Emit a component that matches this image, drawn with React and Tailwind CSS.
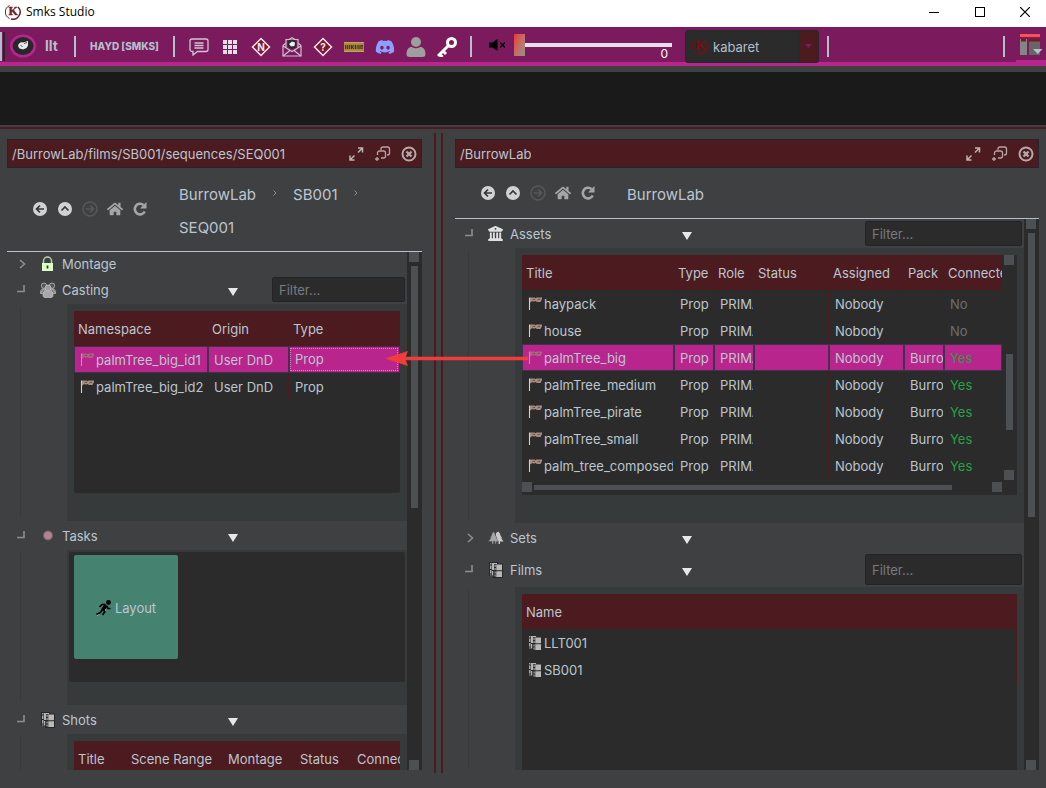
import React from "react";
import clsx from "clsx";
import { FaDiscord, FaHome } from "react-icons/fa";
import { FaBuildingColumns } from "react-icons/fa6";

// ---------- icons ----------

function KabaretLogo({ color, size = 16 }) {
  return (
    <svg width={size} height={size} viewBox="0 0 16 16">
      <path d="M4.500 1.500A7.200 7.200 0 0 0 4.500 14.500" fill="none" stroke={color} strokeWidth="1" />
      <path d="M13 3A7.200 7.200 0 0 1 6 15" fill="none" stroke={color} strokeWidth="1.500" />
      <text x="3.500" y="11" fontSize="12" fontWeight="700" fontFamily="Liberation Serif, serif" fill={color} stroke={color} strokeWidth="0.400">
        K
      </text>
    </svg>
  );
}

function AvatarIcon() {
  return (
    <svg width="26" height="24" viewBox="0 0 26 24">
      <ellipse cx="13" cy="12" rx="13" ry="11.5" fill="#b8258c" />
      <ellipse cx="13" cy="12" rx="10.500" ry="9" fill="#26282b" />
      <path d="M8 12 C8.500 9 11 7.500 13 8.500 L18 7 L18 11.500 L16.500 14 L13 15.500 L9.500 14.500 Z" fill="#e8e8e8" />
      <path d="M10.500 11.500 l2 1 M14 9.500 l3 -1" stroke="#26282b" strokeWidth="0.800" fill="none" />
    </svg>
  );
}

function ChatIcon() {
  return (
    <svg width="20" height="18" viewBox="0 0 20 18" fill="none" stroke="#d2c6d6" strokeWidth="1.3">
      <path d="M3 1h14a2 2 0 0 1 2 2v8.500a2 2 0 0 1-2 2H8.500L4 17v-3.500H3a2 2 0 0 1-2-2V3a2 2 0 0 1 2-2z" />
      <path d="M5.500 5h9M5.500 7.500h9M5.500 10h9" />
    </svg>
  );
}

function GridIcon() {
  const steps = [0, 5, 10];
  return (
    <svg width="14" height="14" viewBox="0 0 14 14" fill="#e6dfe6">
      {steps.map((y) => steps.map((x) => <rect key={x + "-" + y} x={x} y={y} width="4" height="4" />))}
    </svg>
  );
}

function DiamondIcon({ letter }) {
  return (
    <svg width="20" height="20" viewBox="0 0 20 20">
      <path d="M10 1.500 L18.500 10 L10 18.500 L1.500 10 Z" fill="#7d1830" stroke="#f3e6ee" strokeWidth="1.500" />
      <text x="10" y="13.500" textAnchor="middle" fontSize="10" fontWeight="700" fontFamily="Inter, sans-serif" fill="#f3e6ee">
        {letter}
      </text>
    </svg>
  );
}

function MailIcon() {
  return (
    <svg width="20" height="20" viewBox="0 0 20 20" fill="none" stroke="#cfc0d0" strokeWidth="1.200">
      <path d="M4 6 L1 8.500 V19 H19 V8.500 L16 6" />
      <path d="M4 10.500 V2.500 H16 V10.500 M1 9 L10 14.500 L19 9 M1 19 L8 13.500 M19 19 L12 13.500" />
      <circle cx="10" cy="7" r="4.500" fill="#26282b" stroke="none" />
      <path d="M7 7 L10 4.500 L13 5.500 L12.500 9 L9 9.500 Z" fill="#eee" stroke="none" />
      <path d="M7 2.500 L10 0.700 L13 2.500" />
    </svg>
  );
}

function BookIcon() {
  return (
    <svg width="20" height="10" viewBox="0 0 20 10">
      <rect width="20" height="10" fill="#a98a46" />
      <path d="M0 0.500h20M0 9.500h20" stroke="#c9a455" />
      <rect x="1" y="3" width="18" height="4" fill="#8a7038" />
      <path d="M1.500 3v4M3.500 3v4M5.500 3v4M7.500 3v4M8 5l2-2M8 5l2 2M11.500 3v4M14 3v4M16 3v4M17 3.500h2M18 3v4" fill="none" stroke="#3f341f" strokeWidth="0.900" />
    </svg>
  );
}

function UserIcon() {
  return (
    <svg width="20" height="20" viewBox="0 0 20 20" fill="#9e9e9e">
      <circle cx="10" cy="5" r="5" />
      <path d="M0.500 17c0-5 3-7.500 5.500-7 2.500 1.700 5.500 1.700 8 0 2.500-.5 5.500 2 5.500 7 0 2-1 3-3 3h-13c-2 0-3-1-3-3z" />
    </svg>
  );
}

function KeyIcon() {
  return (
    <svg width="20" height="20" viewBox="0 0 20 20" fill="none" stroke="#fff">
      <circle cx="14.500" cy="5.500" r="4" strokeWidth="3" />
      <path d="M11.500 8.500 L1 19 M6 14 l3 3 M2.500 17 l3 3" strokeWidth="3" />
    </svg>
  );
}

function MuteIcon() {
  return (
    <svg width="16" height="12" viewBox="0 0 16 12">
      <path d="M0 3.500h3.500L8.500 0v12L3.500 8.500H0z" fill="#000" />
      <path d="M11 3.500l5 5M16 3.500l-5 5" stroke="#000" strokeWidth="1.300" />
    </svg>
  );
}

function LayoutIcon() {
  return (
    <svg width="24" height="24" viewBox="0 0 24 24">
      <rect x="1" y="1" width="20" height="3" fill="#ff5050" />
      <rect x="1" y="6" width="7" height="16" fill="#858585" />
      <rect x="10" y="6" width="11" height="16" fill="#666" />
      <rect x="2" y="6" width="5" height="2.500" fill="#7a1a1a" />
      <rect x="10" y="6" width="11" height="2.500" fill="#7a1a1a" />
      <path d="M14 16h9.500l-4.750 5z" fill="#b4bfcc" />
    </svg>
  );
}

function CircleArrow({ kind }) {
  const off = kind === "forward";
  const paths = {
    back: "M12 8H4.500M8 4.500L4.500 8L8 11.500",
    up: "M4.500 9.500L8 6L11.500 9.500",
    forward: "M4 8h7.500M8 4.500L11.500 8L8 11.500",
  };
  return (
    <svg width="16" height="16" viewBox="0 0 16 16">
      <circle cx="8" cy="8" r="7" fill={off ? "none" : "#d2d2d2"} stroke={off ? "#56585a" : "none"} strokeWidth="1.500" />
      <path d={paths[kind]} fill="none" stroke={off ? "#56585a" : "#35373a"} strokeWidth="1.700" />
    </svg>
  );
}

function RefreshIcon() {
  return (
    <svg width="16" height="16" viewBox="0 0 16 16">
      <path d="M12.800 10.500A5.300 5.300 0 1 1 11.500 4" fill="none" stroke="#a5a5a5" strokeWidth="2.600" />
      <path d="M14.500 1v6.500H8z" fill="#a5a5a5" />
    </svg>
  );
}

function ExpandIcon() {
  return (
    <svg width="16" height="16" viewBox="0 0 16 16" fill="none" stroke="#c0b2b2" strokeWidth="1.500">
      <path d="M9 2h4.500v4.500M13 2.500l-4 4M5.500 14H1V9.500M1.500 13.500l4-4" />
    </svg>
  );
}

function PopoutIcon() {
  return (
    <svg width="16" height="16" viewBox="0 0 16 16" fill="none" stroke="#b5a5a5" strokeWidth="1.300">
      <path d="M6 4V3a2 2 0 0 1 2-2h4.500a2 2 0 0 1 2 2v4a2 2 0 0 1-2 2H12" />
      <path d="M2.500 9V7a2 2 0 0 1 2-2h4a2 2 0 0 1 2 2v3a2 2 0 0 1-2 2H6M0 13h4M2 11v4" />
    </svg>
  );
}

function CloseIcon() {
  return (
    <svg width="16" height="16" viewBox="0 0 16 16" fill="none" stroke="#b5a9a9">
      <circle cx="8" cy="8" r="6.500" strokeWidth="2" />
      <path d="M5.500 5.500l5 5M10.500 5.500l-5 5" strokeWidth="2.400" />
    </svg>
  );
}

function LockIcon() {
  return (
    <svg width="16" height="16" viewBox="0 0 16 16">
      <path d="M3.500 8V5a4 4 0 0 1 8 0v3" fill="none" stroke="#b9cfae" strokeWidth="1.500" />
      <rect x="2" y="7" width="11" height="8" fill="#dcffc8" />
      <path d="M7.500 9.500v3" stroke="#2f3a2c" strokeWidth="1.800" />
    </svg>
  );
}

function PeopleIcon() {
  return (
    <svg width="16" height="16" viewBox="0 0 16 16" stroke="#c8c8c8" strokeWidth="0.700">
      <path d="M0.500 11c0-3 1-4.500 3.500-4.500M15.500 11c0-3-1-4.500-3.500-4.500" fill="none" />
      <path d="M0.500 11.500h3l2-4.500H3zM15.500 11.500h-3l-2-4.500H13z" fill="#7d7d7d" />
      <circle cx="4" cy="3.700" r="2.700" fill="#555" />
      <circle cx="12" cy="3.700" r="2.700" fill="#555" />
      <path d="M3 13c0-3 2-4.500 5-4.500s5 1.500 5 4.500c0 2-1 2.500-2 2.500H5c-1 0-2-.5-2-2.500z" fill="#a8a8a8" />
      <circle cx="8" cy="6" r="3" fill="#9c9c9c" />
    </svg>
  );
}

function DotIcon() {
  return (
    <svg width="16" height="16" viewBox="0 0 16 16">
      <circle cx="8" cy="7.500" r="4.500" fill="#a98690" stroke="#8a5565" />
    </svg>
  );
}

function TreesIcon() {
  return (
    <svg width="16" height="16" viewBox="0 0 16 16">
      <path d="M10.500 1.500L12.500 4.500H12L14 8h-.7L15.500 11.500H12V14h-1.500V11.500H8V3z" fill="#c8c8c8" />
      <path d="M5.500 1.500L7.500 4.500H7L9 8h-.7L10.500 11.500H8.200V14H7v-2.500H5.500V14H4V11.500H0.300L2.700 8H2L4 4.500H3.500z" fill="#a5a5a5" stroke="#3e4042" strokeWidth="0.400" />
    </svg>
  );
}

function FilmIcon({ outline, width = 16 }) {
  return (
    <svg width={width} height="16" viewBox="0 0 14 16">
      {outline && <path d="M0 0h9v1.500h5V16H4v-2H0z" fill="#262728" />}
      <path d="M1 1h1.500v1.500H1zM1 3.500h1.500V7H1zM1 8h1.500v3.500H1zM1 12.500h1.500v1H1z" fill="#a8a8a8" />
      <path d="M3 1h5v1.200H5V8H3zM3 9h1.200v4.500H3z" fill="#b4b4b4" />
      <path d="M5.500 3h1.200v2H5.500zM5.500 6h1.200v2H5.500zM5.500 9.500h1.200v2H5.500zM5.500 12.500h1.200v2H5.500z" fill="#a8a8a8" />
      <path d="M7.300 2.500H13v5.800H7.300zM7.300 9.300H13V15H7.300z" fill="#b8b8b8" />
    </svg>
  );
}

function FlagIcon() {
  return (
    <svg width="14" height="14" viewBox="0 0 14 14">
      <path d="M1.500 0.500V13" stroke="#e0cdc0" strokeWidth="1.100" />
      <path d="M2 0.500h4.500l1 .7 1-.7H14V2l-1.500 3H9L7.500 4 6.500 4.500 4 4.200 2 5.500z" fill="#a68d80" />
      <path d="M4.500 2.800l1.500-.8 1 1M9.500 3l1.500-1 1 .8" fill="none" stroke="#5a4a44" strokeWidth="0.900" />
    </svg>
  );
}

function RunnerIcon() {
  return (
    <svg width="16" height="16" viewBox="0 0 16 16" fill="none" strokeLinejoin="round">
      <path d="M5.500 11L4.500 13L1 15.500M9.500 9.500L8.500 12.500L6 15" stroke="#dff5df" strokeWidth="1" />
      <circle cx="12.500" cy="2.500" r="2.400" fill="#000" />
      <path d="M10 5L6.500 10.500" stroke="#000" strokeWidth="3.400" />
      <path d="M9.500 4.500H6L3.500 7M10.500 6l1.500 2.500h2.500M6.500 9.500L4.500 12.500L0.500 14.500M7 9.500l2 2L6.500 15" stroke="#000" strokeWidth="1.700" />
    </svg>
  );
}

function Twist({ open }) {
  return (
    <svg width="10" height="10" viewBox="0 0 10 10" fill="none" stroke="#8c8e90" strokeWidth="1.600">
      {open ? <path d="M0 6.500h7V0" /> : <path d="M3 1l4.500 4L3 9" />}
    </svg>
  );
}

// ---------- window chrome ----------

function TitleBar() {
  return (
    <header className="flex h-[27px] shrink-0 items-start bg-white text-black">
      <div className="flex items-center gap-[5px] pt-[3px] pl-[5px]">
        <KabaretLogo color="#6b2227" />
        <span className="font-['Open_Sans',sans-serif] text-[12px] leading-[18px]">Smks Studio</span>
      </div>
      <div className="ml-auto flex">
        <button aria-label="Minimize" className="flex h-6 w-[46px] items-center justify-center">
          <svg width="10" height="10" stroke="#000"><path d="M0 5.500h10" /></svg>
        </button>
        <button aria-label="Maximize" className="flex h-6 w-[46px] items-center justify-center">
          <svg width="10" height="10" fill="none" stroke="#000"><rect x="0.500" y="0.500" width="9" height="9" /></svg>
        </button>
        <button aria-label="Close" className="flex h-6 w-[43px] items-center justify-center">
          <svg width="10" height="10" stroke="#000" strokeWidth="1.200"><path d="M0 0l10 10M10 0L0 10" /></svg>
        </button>
      </div>
    </header>
  );
}

function Separator() {
  return <div className="h-[21px] w-[2px] shrink-0 bg-[#b4bfcc]" />;
}

const TOOLS = [
  { name: "Chat", icon: <ChatIcon /> },
  { name: "Apps", icon: <GridIcon /> },
  { name: "Notes", icon: <DiamondIcon letter="N" /> },
  { name: "Mail", icon: <MailIcon /> },
  { name: "Help", icon: <DiamondIcon letter="?" /> },
  { name: "Booking", icon: <BookIcon /> },
  { name: "Discord", icon: <FaDiscord size={20} color="#8c9eff" /> },
  { name: "User", icon: <UserIcon /> },
  { name: "Key", icon: <KeyIcon /> },
];

function Toolbar() {
  return (
    <nav className="flex h-[39px] shrink-0 items-center border-b-4 border-[#b8258c] bg-[#7b1a5c] pt-[3px] text-[#b4bfcc]">
      <div className="h-[29px] w-[5px] shrink-0 border-r-2 border-l-2 border-r-[#26282b] border-l-[#b4bfcc]" />
      <button aria-label="Profile" className="ml-[5px]">
        <AvatarIcon />
      </button>
      <button className="ml-[9px] w-[29px] text-left text-[14px] font-bold">llt</button>
      <Separator />
      <button className="ml-[14px] w-[83px] text-left text-[10px] font-extrabold whitespace-nowrap">HAYD [SMKS]</button>
      <Separator />
      <div className="ml-[8px] flex pt-px">
        {TOOLS.map((tool) => (
          <button key={tool.name} aria-label={tool.name} className="flex h-[30px] w-[31px] items-center justify-center">
            {tool.icon}
          </button>
        ))}
      </div>
      <div className="ml-[8px]">
        <Separator />
      </div>
      <div className="ml-[17px] flex items-center gap-[9px] pb-[2px]">
        <MuteIcon />
        <div className="relative flex h-[32px] w-[158px] items-center">
          <input
            type="range"
            aria-label="Volume"
            min="0"
            max="100"
            defaultValue="0"
            className="h-[22px] w-full appearance-none bg-transparent [&::-webkit-slider-runnable-track]:h-1 [&::-webkit-slider-runnable-track]:bg-[#e6dfe6] [&::-webkit-slider-thumb]:-mt-[9px] [&::-webkit-slider-thumb]:h-[22px] [&::-webkit-slider-thumb]:w-[11px] [&::-webkit-slider-thumb]:appearance-none [&::-webkit-slider-thumb]:bg-linear-to-br [&::-webkit-slider-thumb]:from-[#ea2f2f] [&::-webkit-slider-thumb]:to-[#8f8f8f]"
          />
          <span className="absolute right-[4px] bottom-0 text-[12px] leading-[14px] text-white">0</span>
        </div>
      </div>
      <div className="relative ml-[13px] h-[33px] w-[134px] shrink-0 rounded-[3px] border border-[#26282b] bg-[#2b2b2b]">
        <select aria-label="Project" className="h-full w-full appearance-none bg-transparent pt-[2px] pl-[27px] text-[13px]">
          <option>kabaret</option>
        </select>
        <div className="pointer-events-none absolute top-[7px] left-[6px]">
          <KabaretLogo color="#7a0d10" />
        </div>
        <div className="pointer-events-none absolute inset-y-0 right-0 flex w-[20px] items-center justify-center border-l border-[#26282b] bg-[#4b1b20]">
          <svg width="7" height="5"><path d="M0 0h7L3.500 4z" fill="#7b1a5c" /></svg>
        </div>
      </div>
      <div className="ml-[8px]">
        <Separator />
      </div>
      <div className="ml-auto">
        <Separator />
      </div>
      <button aria-label="Layouts" className="ml-[11px] flex h-[32px] w-[30px] items-center border-b-2 border-[#b8258c] pl-[3px]">
        <LayoutIcon />
      </button>
    </nav>
  );
}

// ---------- pane parts ----------

function PaneHeader({ path }) {
  return (
    <div className="flex h-[29px] shrink-0 items-center justify-between border border-[#26232a] bg-[#4b1b20] pr-[4px] pl-[4px]">
      <span className="truncate">{path}</span>
      <div className="flex gap-[10px]">
        <button aria-label="Expand"><ExpandIcon /></button>
        <button aria-label="Detach"><PopoutIcon /></button>
        <button aria-label="Close view"><CloseIcon /></button>
      </div>
    </div>
  );
}

function NavBar({ crumbs, className }) {
  return (
    <div className={clsx("flex shrink-0 items-center border-b border-[#b4bfcc] text-[#a5a5a5]", className)}>
      <div className="flex w-[172px] shrink-0 items-center gap-[9px] pb-px pl-[25px]">
        <button aria-label="Back"><CircleArrow kind="back" /></button>
        <button aria-label="Up"><CircleArrow kind="up" /></button>
        <button aria-label="Forward"><CircleArrow kind="forward" /></button>
        <button aria-label="Home"><FaHome size={16} /></button>
        <button aria-label="Refresh"><RefreshIcon /></button>
      </div>
      <div className="flex flex-wrap pt-[2px] pr-6 text-[15px] leading-[33px] text-[#bcc6cf]">
        {crumbs.map((crumb, i) => (
          <span key={crumb} className="flex">
            <a href="#">{crumb}</a>
            {i < crumbs.length - 1 && (
              <span className="flex w-[37px] justify-center pt-[12px]">
                <svg width="4" height="6" fill="none" stroke="#8c8e90"><path d="M0.500 0.500L3 3L0.500 5.500" /></svg>
              </span>
            )}
          </span>
        ))}
      </div>
    </div>
  );
}

// vertical bar with square end buttons
function ScrollBar({ thumb }) {
  return (
    <div className="flex w-[15px] shrink-0 flex-col bg-[#2b2b2b] pl-[2px]">
      <div className="size-[10px] bg-[#4d5052]" />
      <div className={clsx("ml-[2px] w-[7px] bg-[#4d5052]", thumb)} />
      <div className="mt-auto size-[10px] bg-[#4d5052]" />
    </div>
  );
}

function SectionRow({ label, icon, open, menu, labelWidth, filter, className }) {
  return (
    <div className={clsx("flex shrink-0 items-center", className)}>
      <button className={clsx("flex shrink-0 items-center pl-[10px] text-left", labelWidth)}>
        <Twist open={open} />
        <span className="ml-[13px] flex w-[22px]">{icon}</span>
        {label}
      </button>
      {menu && (
        <button aria-label={label + " menu"} className="pt-[4px]">
          <svg width="10" height="8"><path d="M0 0h10L5 8z" fill="#e8e8e8" /></svg>
        </button>
      )}
      {filter && (
        <input
          type="text"
          aria-label={"Filter " + label}
          placeholder="Filter..."
          className={clsx(
            "mr-[2px] ml-auto rounded-[2px] border border-[#222429] bg-[#2b2b2b] px-[6px] placeholder:text-[#777b7f]",
            filter
          )}
        />
      )}
    </div>
  );
}

function SectionBody({ children, className }) {
  return (
    <div className={clsx("flex shrink-0", className)}>
      <div className="w-[60px] shrink-0 py-[3px] pl-[13px]">
        <div className="h-full border-l border-[#37393b]" />
      </div>
      <div className="min-w-0 flex-1 bg-[#363a3b]">{children}</div>
    </div>
  );
}

function DataTable({ head, widths, rows = [], selected, icon, focusLast, minWidth }) {
  return (
    <table className={clsx("w-full table-fixed border-separate border-spacing-0", minWidth)}>
      <colgroup>
        {widths.map((w, i) => (
          <col key={i} className={w} />
        ))}
      </colgroup>
      <thead>
        <tr className="h-[35px] bg-[#4b1b20]">
          {head.map((h) => (
            <th key={h} className="overflow-hidden pl-[4px] text-left font-normal whitespace-nowrap">
              {h}
            </th>
          ))}
        </tr>
      </thead>
      <tbody>
        {rows.map((row, r) => (
          <tr key={row[0]} className="h-[27px]">
            {row.map((cell, c) => (
              <td
                key={c}
                className={clsx(
                  "overflow-hidden border pl-[5px] whitespace-nowrap",
                  r === selected
                    ? "border-[#433050] bg-[#b8258c]"
                    : "border-transparent border-r-[#4b1b20]",
                  cell === "Yes" && "text-[#26a144]",
                  cell === "No" && "text-[#6c6f72]"
                )}
              >
                {c === 0 ? (
                  <span className="flex items-center gap-[2px]">
                    <span className={clsx("shrink-0", r === selected && "opacity-60")}>{icon}</span>
                    {cell}
                  </span>
                ) : focusLast && r === selected && c === row.length - 1 ? (
                  <span className="mr-px -ml-[5px] block border border-dotted border-[#cf86c0] pl-[4px] leading-[21px]">{cell}</span>
                ) : (
                  <span className="block overflow-hidden">{cell}</span>
                )}
              </td>
            ))}
          </tr>
        ))}
      </tbody>
    </table>
  );
}

// ---------- panes ----------

const CASTING = [
  ["palmTree_big_id1", "User DnD", "Prop"],
  ["palmTree_big_id2", "User DnD", "Prop"],
];

const ASSETS = [
  ["haypack", "Prop", "PRIMARY", "", "Nobody", "", "No"],
  ["house", "Prop", "PRIMARY", "", "Nobody", "", "No"],
  ["palmTree_big", "Prop", "PRIMARY", "", "Nobody", "BurrowLab", "Yes"],
  ["palmTree_medium", "Prop", "PRIMARY", "", "Nobody", "BurrowLab", "Yes"],
  ["palmTree_pirate", "Prop", "PRIMARY", "", "Nobody", "BurrowLab", "Yes"],
  ["palmTree_small", "Prop", "PRIMARY", "", "Nobody", "BurrowLab", "Yes"],
  ["palm_tree_composed", "Prop", "PRIMARY", "", "Nobody", "BurrowLab", "Yes"],
];

function SequencePane() {
  return (
    <section className="flex min-h-0 min-w-0 flex-col">
      <PaneHeader path="/BurrowLab/films/SB001/sequences/SEQ001" />
      <NavBar crumbs={["BurrowLab", "SB001", "SEQ001"]} className="h-[84px]" />
      <div className="flex min-h-0 flex-1">
        <div className="flex min-w-0 flex-1 flex-col overflow-hidden">
          <SectionRow label="Montage" icon={<LockIcon />} labelWidth="w-[221px]" className="mb-[2px] h-[23px]" />
          <SectionRow label="Casting" icon={<PeopleIcon />} open menu labelWidth="w-[221px]" filter="h-[25px] w-[133px]" className="mb-[2px] h-[25px]" />
          <SectionBody className="h-[217px]">
            <div className="m-[7px] h-[182px] overflow-hidden rounded-b-[2px] bg-[#2b2b2b]">
              <DataTable
                head={["Namespace", "Origin", "Type"]}
                widths={["w-[134px]", "w-[81px]", "w-auto"]}
                rows={CASTING}
                selected={0}
                icon={<FlagIcon />}
                focusLast
              />
            </div>
          </SectionBody>
          <SectionRow label="Tasks" icon={<DotIcon />} open menu labelWidth="w-[221px]" className="h-[29px]" />
          <SectionBody className="h-[155px]">
            <div className="m-[2px] h-[130px] rounded-[2px] bg-[#2b2b2b] px-[5px] py-[3px]">
              <button className="flex size-[104px] items-center justify-center gap-[3px] rounded-[2px] bg-[#468270] pt-px">
                <RunnerIcon />
                Layout
              </button>
            </div>
          </SectionBody>
          <SectionRow label="Shots" icon={<FilmIcon outline />} open menu labelWidth="w-[221px]" className="h-[29px]" />
          <SectionBody className="h-[200px]">
            <div className="m-[7px] h-[180px] overflow-hidden bg-[#2b2b2b]">
              <DataTable
                head={["Title", "Scene Range", "Montage", "Status", "Connected"]}
                widths={["w-[53px]", "w-[97px]", "w-[72px]", "w-[57px]", "w-auto"]}
                minWidth="min-w-[360px]"
              />
            </div>
          </SectionBody>
        </div>
        <ScrollBar thumb="mt-[4px] h-[242px]" />
      </div>
    </section>
  );
}

function ProjectPane() {
  return (
    <section className="flex min-h-0 min-w-0 flex-col">
      <PaneHeader path="/BurrowLab" />
      <NavBar crumbs={["BurrowLab"]} className="h-[51px]" />
      <div className="flex min-h-0 flex-1">
        <div className="flex min-w-0 flex-1 flex-col overflow-hidden">
          <SectionRow label="Assets" icon={<FaBuildingColumns size={15} color="#e0e0e0" />} open menu labelWidth="w-[227px]" filter="h-[25px] w-[157px]" className="h-[29px]" />
          <SectionBody className="h-[275px]">
            <div className="m-[7px] flex h-[240px] flex-col bg-[#2b2b2b]">
              <div className="flex h-[225px]">
                <div className="min-w-0 flex-1 overflow-hidden">
                  <DataTable
                    head={["Title", "Type", "Role", "Status", "Assigned", "Pack", "Connected"]}
                    widths={["w-[152px]", "w-[40px]", "w-[40px]", "w-[75px]", "w-[75px]", "w-[40px]", "w-auto"]}
                    rows={ASSETS}
                    selected={2}
                    icon={<FlagIcon />}
                  />
                </div>
                <ScrollBar thumb="mt-[89px] h-[76px]" />
              </div>
              <div className="mr-[15px] flex items-center pt-[2px]">
                <div className="size-[10px] bg-[#4d5052]" />
                <div className="mr-[40px] ml-[2px] h-[5px] flex-1 bg-[#4d5052]" />
                <div className="size-[10px] bg-[#4d5052]" />
              </div>
            </div>
          </SectionBody>
          <SectionRow label="Sets" icon={<TreesIcon />} menu labelWidth="w-[227px]" className="h-[29px]" />
          <SectionRow label="Films" icon={<FilmIcon outline />} open menu labelWidth="w-[227px]" filter="h-[31px] w-[157px]" className="h-[35px]" />
          <SectionBody className="min-h-0 flex-1">
            <div className="mx-[7px] mt-[7px] h-full bg-[#2b2b2b]">
              <DataTable head={["Name"]} widths={["w-auto"]} rows={[["LLT001"], ["SB001"]]} icon={<FilmIcon width={14} />} />
            </div>
          </SectionBody>
        </div>
        <ScrollBar thumb="mt-[4px] h-[284px]" />
      </div>
    </section>
  );
}

function Splitter() {
  return (
    <div className="relative">
      <div className="-mt-[6px] -mb-[3px] ml-[12px] h-[calc(100%+9px)] w-[9px] border-x-2 border-[#4b1b20]" />
      {/* drag and drop arrow between the two tables */}
      <svg className="absolute top-[212px] -left-[37px] z-10" width="144" height="15" viewBox="0 0 144 15">
        <path d="M20 7.500H143" stroke="#f23c3c" strokeWidth="3.500" />
        <path d="M0 7.500L23 0L20 7.500L23 15z" fill="#f23c3c" />
      </svg>
    </div>
  );
}

function App() {
  return (
    <div className="flex h-screen flex-col overflow-hidden bg-[#3e4042] font-[Inter,'Open_Sans',sans-serif] text-[13px] leading-[18px] text-[#bcc6cf]">
      <TitleBar />
      <Toolbar />
      <div className="mt-[6px] h-[53px] shrink-0 bg-[#1a1a1a]" />
      <div className="mt-[2px] h-[2px] shrink-0 bg-[#4b1b20]" />
      <main className="mt-[10px] mb-[18px] grid min-h-0 flex-1 grid-cols-[415fr_33px_584fr] grid-rows-[minmax(0,1fr)] px-[7px]">
        <SequencePane />
        <Splitter />
        <ProjectPane />
      </main>
    </div>
  );
}

export default App;
